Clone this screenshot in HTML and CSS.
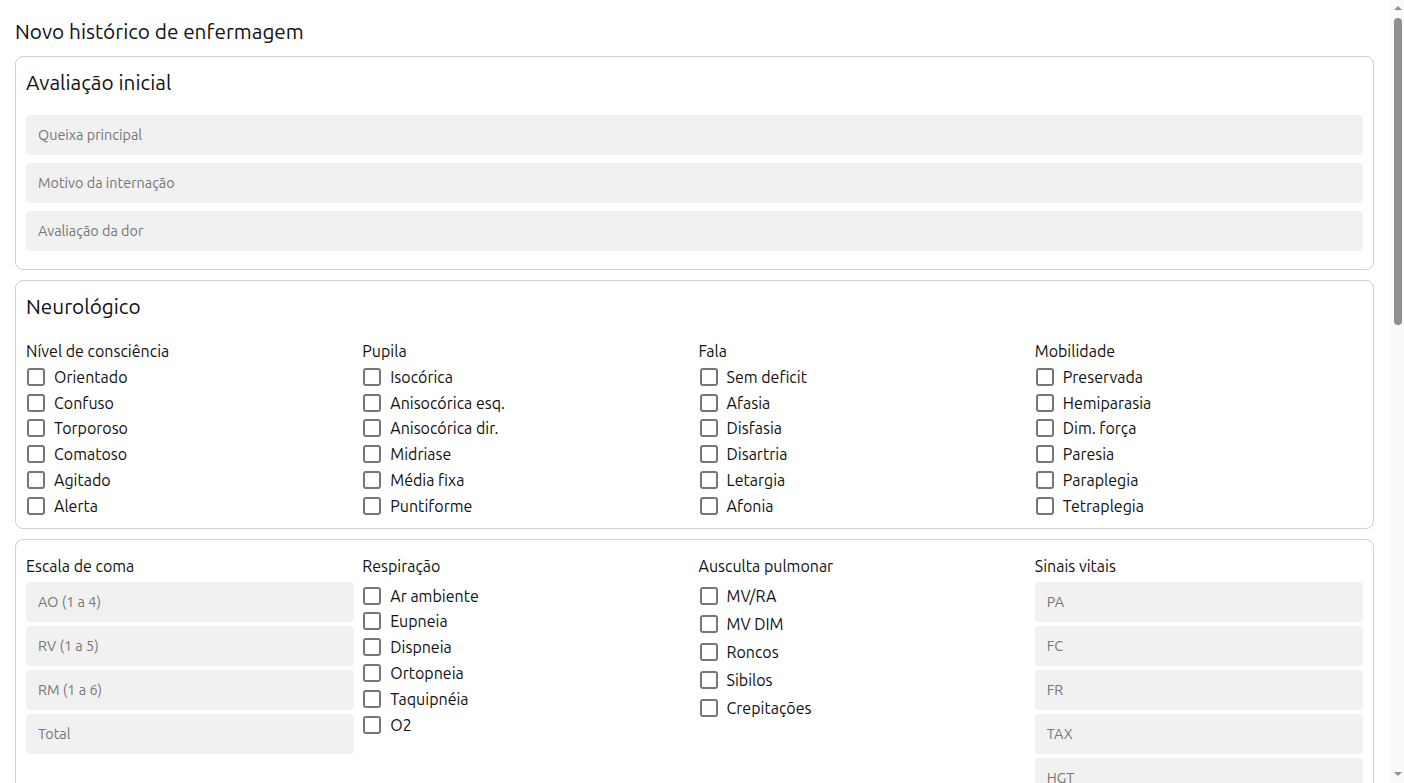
FILE: index.html
```html
<!DOCTYPE html>
<html lang="pt-BR">
<head>
<meta charset="utf-8">
<title>Novo histórico de enfermagem</title>
<link rel="stylesheet" href="styles.css">
</head>
<body>
<main class="page">
  <h1 class="page-title">Novo histórico de enfermagem</h1>

  <section class="card card-initial">
    <h2 class="card-title">Avaliação inicial</h2>
    <input class="field field-spaced" placeholder="Queixa principal">
    <input class="field field-spaced" placeholder="Motivo da internação">
    <input class="field field-spaced" placeholder="Avaliação da dor">
  </section>

  <section class="card card-neuro">
    <h2 class="card-title">Neurológico</h2>
    <div class="cols">
      <div class="col">
        <div class="col-label">Nível de consciência</div>
        <label class="opt"><input type="checkbox" class="box"><span>Orientado</span></label>
        <label class="opt"><input type="checkbox" class="box"><span>Confuso</span></label>
        <label class="opt"><input type="checkbox" class="box"><span>Torporoso</span></label>
        <label class="opt"><input type="checkbox" class="box"><span>Comatoso</span></label>
        <label class="opt"><input type="checkbox" class="box"><span>Agitado</span></label>
        <label class="opt"><input type="checkbox" class="box"><span>Alerta</span></label>
      </div>
      <div class="col">
        <div class="col-label">Pupila</div>
        <label class="opt"><input type="checkbox" class="box"><span>Isocórica</span></label>
        <label class="opt"><input type="checkbox" class="box"><span>Anisocórica esq.</span></label>
        <label class="opt"><input type="checkbox" class="box"><span>Anisocórica dir.</span></label>
        <label class="opt"><input type="checkbox" class="box"><span>Midriase</span></label>
        <label class="opt"><input type="checkbox" class="box"><span>Média fixa</span></label>
        <label class="opt"><input type="checkbox" class="box"><span>Puntiforme</span></label>
      </div>
      <div class="col">
        <div class="col-label">Fala</div>
        <label class="opt"><input type="checkbox" class="box"><span>Sem deficit</span></label>
        <label class="opt"><input type="checkbox" class="box"><span>Afasia</span></label>
        <label class="opt"><input type="checkbox" class="box"><span>Disfasia</span></label>
        <label class="opt"><input type="checkbox" class="box"><span>Disartria</span></label>
        <label class="opt"><input type="checkbox" class="box"><span>Letargia</span></label>
        <label class="opt"><input type="checkbox" class="box"><span>Afonia</span></label>
      </div>
      <div class="col">
        <div class="col-label">Mobilidade</div>
        <label class="opt"><input type="checkbox" class="box"><span>Preservada</span></label>
        <label class="opt"><input type="checkbox" class="box"><span>Hemiparasia</span></label>
        <label class="opt"><input type="checkbox" class="box"><span>Dim. força</span></label>
        <label class="opt"><input type="checkbox" class="box"><span>Paresia</span></label>
        <label class="opt"><input type="checkbox" class="box"><span>Paraplegia</span></label>
        <label class="opt"><input type="checkbox" class="box"><span>Tetraplegia</span></label>
      </div>
    </div>
  </section>

  <section class="card card-vitals">
    <div class="cols">
      <div class="col col-fields">
        <div class="col-label">Escala de coma</div>
        <input class="field" placeholder="AO (1 a 4)">
        <input class="field" placeholder="RV (1 a 5)">
        <input class="field" placeholder="RM (1 a 6)">
        <input class="field" placeholder="Total">
      </div>
      <div class="col col-resp">
        <div class="col-label">Respiração</div>
        <label class="opt"><input type="checkbox" class="box"><span>Ar ambiente</span></label>
        <label class="opt"><input type="checkbox" class="box"><span>Eupneia</span></label>
        <label class="opt"><input type="checkbox" class="box"><span>Dispneia</span></label>
        <label class="opt"><input type="checkbox" class="box"><span>Ortopneia</span></label>
        <label class="opt"><input type="checkbox" class="box"><span>Taquipnéia</span></label>
        <label class="opt"><input type="checkbox" class="box"><span>O2</span></label>
      </div>
      <div class="col col-ausc">
        <div class="col-label">Ausculta pulmonar</div>
        <label class="opt opt-tall"><input type="checkbox" class="box"><span>MV/RA</span></label>
        <label class="opt opt-tall"><input type="checkbox" class="box"><span>MV DIM</span></label>
        <label class="opt opt-tall"><input type="checkbox" class="box"><span>Roncos</span></label>
        <label class="opt opt-tall"><input type="checkbox" class="box"><span>Sibilos</span></label>
        <label class="opt opt-tall"><input type="checkbox" class="box"><span>Crepitações</span></label>
      </div>
      <div class="col col-fields">
        <div class="col-label">Sinais vitais</div>
        <input class="field" placeholder="PA">
        <input class="field" placeholder="FC">
        <input class="field" placeholder="FR">
        <input class="field" placeholder="TAX">
        <input class="field" placeholder="HGT">
        <input class="field" placeholder="SpO2">
        <input class="field" placeholder="Peso">
        <input class="field" placeholder="Altura">
      </div>
    </div>
  </section>

  <section class="card card-initial">
    <h2 class="card-title">Gastrointestinal</h2>
    <input class="field field-spaced" placeholder="Dieta">
    <input class="field field-spaced" placeholder="Eliminações intestinais">
    <input class="field field-spaced" placeholder="Abdome">
  </section>

  <section class="card card-initial">
    <h2 class="card-title">Geniturinário</h2>
    <input class="field field-spaced" placeholder="Diurese">
    <input class="field field-spaced" placeholder="Dispositivos">
    <input class="field field-spaced" placeholder="Observações">
  </section>

  <section class="card card-initial">
    <h2 class="card-title">Pele e mucosas</h2>
    <input class="field field-spaced" placeholder="Integridade">
    <input class="field field-spaced" placeholder="Lesões">
    <input class="field field-spaced" placeholder="Observações">
  </section>

  <section class="card card-initial">
    <h2 class="card-title">Observações gerais</h2>
    <input class="field field-spaced" placeholder="Alergias">
    <input class="field field-spaced" placeholder="Medicamentos em uso">
  </section>
</main>
<div class="rail" aria-hidden="true">
  <span class="rail-arrow rail-up"></span>
  <span class="rail-thumb"></span>
  <span class="rail-fill"></span>
  <span class="rail-arrow rail-down"></span>
</div>
</body>
</html>
```
FILE: styles.css
```css
* {
  box-sizing: border-box;
}

html,
body {
  height: 100%;
}

body {
  margin: 0;
  display: flex;
  overflow: hidden;
  background: #fff;
  color: #111;
  font-family: Ubuntu, "Noto Sans", "Open Sans", sans-serif;
}

.page {
  flex: 1;
  min-width: 0;
  height: 100vh;
  overflow-y: auto;
  scrollbar-width: none;
  padding: 20px 15px 30px;
}

.rail {
  flex: none;
  width: 15px;
  height: 100vh;
  display: flex;
  flex-direction: column;
  align-items: flex-end;
  background: linear-gradient(to right, #fff 2px, #fafafa 2px);
}

.rail-arrow {
  flex: none;
  width: 13px;
  height: 17px;
  display: flex;
  justify-content: center;
}

.rail-up::before,
.rail-down::before {
  content: "";
  width: 0;
  height: 0;
  border-left: 4px solid transparent;
  border-right: 4px solid transparent;
}

.rail-up::before {
  margin-top: 6px;
  border-bottom: 4px solid #8f8f8f;
}

.rail-down {
  align-items: flex-end;
}

.rail-down::before {
  margin-bottom: 7px;
  border-top: 4px solid #8f8f8f;
}

.rail-thumb {
  flex: none;
  width: 8px;
  height: 307px;
  margin: 1px 2px 0 0;
  border-radius: 4px;
  background: #8f8f8f;
}

.rail-fill {
  flex: 1;
}

.page-title {
  margin: 0 0 12px;
  font-size: 20.8px;
  line-height: 24px;
  font-weight: 400;
}

.card {
  border: 1px solid #cfcfcf;
  border-radius: 8px;
  padding: 10px 10px 8px;
  margin-bottom: 10px;
}

.card-initial {
  padding-bottom: 10px;
}

.card-neuro {
  padding-bottom: 9px;
}

.card-vitals {
  padding-top: 14px;
}

.card-title {
  margin: 0 0 20px;
  padding-top: 4px;
  font-size: 20.8px;
  line-height: 24px;
  font-weight: 400;
}

.field {
  display: block;
  width: 100%;
  height: 40px;
  border: none;
  border-radius: 4px;
  background: #f1f1f1;
  padding: 0 12px;
  font-family: inherit;
  font-size: 14.4px;
  color: #222;
  outline: none;
}

.field::placeholder {
  color: #767676;
}

.field-spaced {
  margin-bottom: 8px;
}

.cols {
  display: grid;
  grid-template-columns: repeat(4, 1fr);
  gap: 8px;
  align-items: start;
}

.col {
  display: flex;
  flex-direction: column;
}

.col-label {
  font-size: 16px;
  line-height: 24px;
  margin-bottom: 1px;
}

.col-fields {
  gap: 4px;
}

.col-fields .col-label {
  margin-bottom: 0;
}

.col-resp .col-label {
  margin-bottom: 5px;
}

.col-ausc .col-label {
  margin-bottom: 4px;
}

.opt {
  display: flex;
  align-items: center;
  height: 25.8px;
  font-size: 16px;
  cursor: pointer;
}

.opt-tall {
  height: 28px;
}

.box {
  appearance: none;
  -webkit-appearance: none;
  flex: none;
  width: 18px;
  height: 18px;
  margin: 0 9px 0 1px;
  border: 2px solid #767676;
  border-radius: 3px;
  background: #fff;
}

.box:checked {
  background: #1a73e8;
  border-color: #1a73e8;
}
```
